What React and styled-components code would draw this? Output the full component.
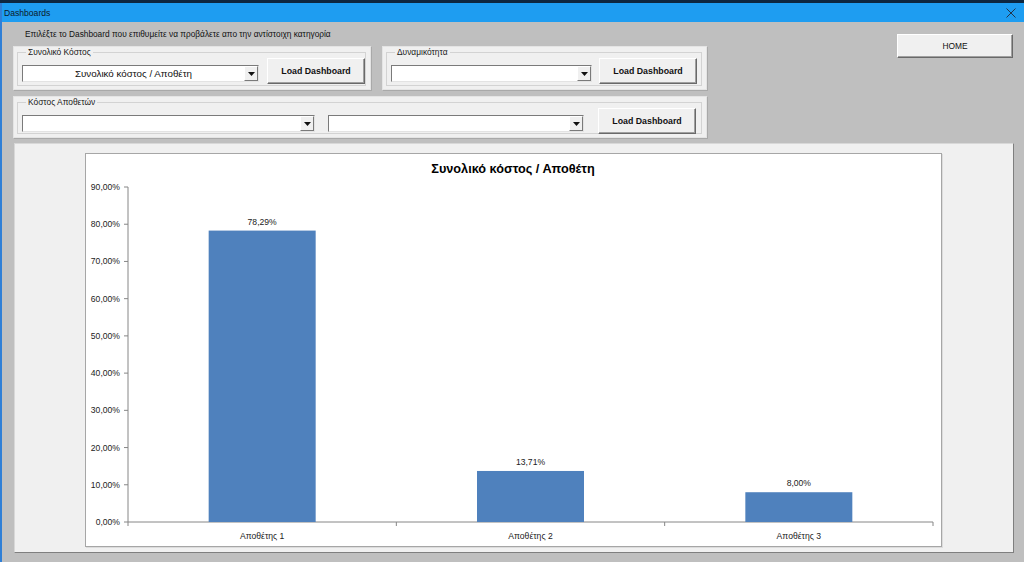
import styled, { createGlobalStyle } from 'styled-components';

const GlobalStyle = createGlobalStyle`
  html, body {
    margin: 0;
    padding: 0;
    background: #0d2740;
  }
  body {
    font-family: "Liberation Sans", Arial, sans-serif;
    color: #111;
  }
  #root {
    width: 1024px;
    height: 562px;
    overflow: hidden;
  }
`;

const bars = [
  { name: 'Αποθέτης 1', value: 78.29 },
  { name: 'Αποθέτης 2', value: 13.71 },
  { name: 'Αποθέτης 3', value: 8.0 },
];

const fmt = (v) => v.toFixed(2).replace('.', ',') + '%';

const ComboBox = ({ width, value }) => (
  <Combo $width={width}>
    <ComboText>{value}</ComboText>
    <ComboArrow>
      <svg width="7" height="4" viewBox="0 0 7 4">
        <path d="M0 0h7L3.5 4z" fill="#111" />
      </svg>
    </ComboArrow>
  </Combo>
);

const Chart = () => {
  // plot geometry inside the white chart frame
  const x0 = 42;
  const x1 = 847;
  const yZero = 368;
  const perTen = (368 - 33) / 9;
  const catW = (x1 - x0) / bars.length;
  const barW = 107;
  const ticks = Array.from({ length: 10 }, (_, i) => i);

  return (
    <svg width="855" height="392" viewBox="0 0 855 392">
      <text x="427" y="19" textAnchor="middle" fontSize="12.7" fontWeight="700" fill="#000">
        Συνολικό κόστος / Αποθέτη
      </text>
      <line x1={x0} y1={33} x2={x0} y2={yZero} stroke="#868686" />
      {ticks.map((t) => {
        const y = yZero - t * perTen;
        return (
          <g key={t}>
            <line x1={x0 - 4} y1={y} x2={x0} y2={y} stroke="#868686" />
            <text x={x0 - 8} y={y + 3} textAnchor="end" fontSize="8.6" fill="#222">
              {fmt(t * 10)}
            </text>
          </g>
        );
      })}
      <line x1={x0} y1={yZero} x2={x1} y2={yZero} stroke="#868686" />
      {[0, 1, 2, 3].map((i) => (
        <line key={i} x1={x0 + i * catW} y1={yZero} x2={x0 + i * catW} y2={yZero + 4} stroke="#868686" />
      ))}
      {bars.map((b, i) => {
        const cx = x0 + catW * (i + 0.5);
        const h = (b.value / 10) * perTen;
        return (
          <g key={b.name}>
            <rect x={cx - barW / 2} y={yZero - h} width={barW} height={h} fill="#4f81bd" />
            <text x={cx} y={yZero - h - 6} textAnchor="middle" fontSize="8.6" fill="#222">
              {fmt(b.value)}
            </text>
            <text x={cx} y={385} textAnchor="middle" fontSize="8.6" fill="#222">
              {b.name}
            </text>
          </g>
        );
      })}
    </svg>
  );
};

export default function App() {
  return (
    <>
      <GlobalStyle />
      <Shell>
        <TopStrip />
        <Window>
          <TitleBar>
            <TitleText>Dashboards</TitleText>
            <CloseIcon width="10" height="10" viewBox="0 0 10 10">
              <path d="M0.5 0.5l9 9M9.5 0.5l-9 9" stroke="#23344a" strokeWidth="1" />
            </CloseIcon>
          </TitleBar>
          <Body>
            <TopArea>
              <Controls>
                <Instruction>
                  Επιλέξτε το Dashboard που επιθυμείτε να προβάλετε απο την αντίστοιχη κατηγορία
                </Instruction>
                <FrameRow>
                  <Frame $width={358} $height={44}>
                    <Group>
                      <Legend>Συνολικό Κόστος</Legend>
                      <GroupContent $gap={8}>
                        <ComboBox width={237} value="Συνολικό κόστος / Αποθέτη" />
                        <LoadButton>Load Dashboard</LoadButton>
                      </GroupContent>
                    </Group>
                  </Frame>
                  <Frame $width={325} $height={44}>
                    <Group>
                      <Legend>Δυναμικότητα</Legend>
                      <GroupContent $gap={7}>
                        <ComboBox width={201} value="" />
                        <LoadButton>Load Dashboard</LoadButton>
                      </GroupContent>
                    </Group>
                  </Frame>
                </FrameRow>
                <FrameRow $top={6}>
                  <Frame $width={694} $height={42}>
                    <Group>
                      <Legend>Κόστος Αποθετών</Legend>
                      <GroupContent $gap={13}>
                        <ComboBox width={293} value="" />
                        <ComboBox width={256} value="" />
                        <LoadButton $shift={1}>Load Dashboard</LoadButton>
                      </GroupContent>
                    </Group>
                  </Frame>
                </FrameRow>
              </Controls>
              <HomeButton>HOME</HomeButton>
            </TopArea>
            <ChartPanel>
              <ChartFrame>
                <Chart />
              </ChartFrame>
            </ChartPanel>
          </Body>
        </Window>
      </Shell>
    </>
  );
}

const Shell = styled.div`
  width: 1024px;
  height: 562px;
  display: flex;
  flex-direction: column;
`;

const TopStrip = styled.div`
  height: 3px;
  background: #0d2740;
`;

const Window = styled.div`
  flex: 1;
  display: flex;
  flex-direction: column;
  border-left: 2px solid #2f7fd6;
  background: #bfbfbf;
  min-height: 0;
`;

const TitleBar = styled.div`
  height: 19px;
  flex-shrink: 0;
  background: #1e9df1;
  display: flex;
  align-items: center;
  justify-content: space-between;
  padding: 0 8px 0 2px;
`;

const TitleText = styled.span`
  font-size: 8.6px;
  color: #0b1a2a;
`;

const CloseIcon = styled.svg`
  display: block;
`;

const Body = styled.div`
  flex: 1;
  display: flex;
  flex-direction: column;
  padding: 0 9px 0 11px;
  min-height: 0;
`;

const TopArea = styled.div`
  display: flex;
  justify-content: space-between;
  align-items: flex-start;
`;

const Controls = styled.div`
  width: 694px;
  display: flex;
  flex-direction: column;
`;

const Instruction = styled.div`
  height: 24px;
  line-height: 24px;
  padding-left: 12px;
  font-size: 8.3px;
  color: #111;
  white-space: nowrap;
`;

const FrameRow = styled.div`
  display: flex;
  gap: 11px;
  margin-top: ${(p) => p.$top || 0}px;
`;

const Frame = styled.div`
  box-sizing: border-box;
  width: ${(p) => p.$width}px;
  height: ${(p) => p.$height}px;
  background: #f0f0f0;
  border: 1px solid #e4e4e4;
  box-shadow: 1px 1px 0 #a9a9a9;
  padding: 0 4px 3px 3px;
  display: flex;
`;

const Group = styled.fieldset`
  flex: 1;
  margin: 0;
  padding: 0 0 0 4px;
  border: 1px solid #d3d3d3;
  border-radius: 0;
  min-width: 0;
`;

const Legend = styled.legend`
  font-size: 8.4px;
  line-height: 11px;
  color: #1a1a1a;
  padding: 0 2px;
  margin-left: 4px;
`;

const GroupContent = styled.div`
  display: flex;
  align-items: flex-start;
  gap: ${(p) => p.$gap}px;
`;

const Combo = styled.div`
  box-sizing: border-box;
  width: ${(p) => p.$width}px;
  height: 17px;
  margin-top: 7px;
  background: #fff;
  border: 1px solid;
  border-color: #7a7a7a #e3e3e3 #e3e3e3 #7a7a7a;
  display: flex;
  align-items: stretch;
`;

const ComboText = styled.div`
  flex: 1;
  font-size: 9.8px;
  line-height: 15px;
  text-align: center;
  color: #111;
  white-space: nowrap;
  overflow: hidden;
`;

const ComboArrow = styled.div`
  box-sizing: border-box;
  width: 14px;
  background: #f0f0f0;
  border: 1px solid;
  border-color: #fff #7a7a7a #7a7a7a #fff;
  display: flex;
  align-items: center;
  justify-content: center;
`;

const LoadButton = styled.div`
  box-sizing: border-box;
  width: 98px;
  height: 26px;
  margin-left: ${(p) => p.$shift || 0}px;
  background: #f0f0f0;
  border: 1px solid;
  border-color: #fff #696969 #696969 #fff;
  box-shadow: inset -1px -1px 0 #a0a0a0;
  display: flex;
  align-items: center;
  justify-content: center;
  font-size: 8.8px;
  font-weight: 700;
  color: #111;
  white-space: nowrap;
`;

const HomeButton = styled.div`
  box-sizing: border-box;
  width: 116px;
  height: 24px;
  margin-top: 12px;
  margin-right: 2px;
  background: #f0f0f0;
  border: 1px solid;
  border-color: #fff #696969 #696969 #fff;
  box-shadow: inset -1px -1px 0 #a0a0a0;
  display: flex;
  align-items: center;
  justify-content: center;
  font-size: 8.4px;
  color: #111;
`;

const ChartPanel = styled.div`
  box-sizing: border-box;
  width: 1000px;
  height: 410px;
  flex-shrink: 0;
  margin: 5px 0 0 1px;
  background: #f0f0f0;
  border: 1px solid;
  border-color: #d8d8d8 #7f7f7f #7f7f7f #d8d8d8;
  padding: 9px 0 0 70px;
`;

const ChartFrame = styled.div`
  width: 855px;
  height: 392px;
  background: #fff;
  border: 1px solid #a6a6a6;
  box-shadow: 1px 1px 0 #dcdcdc;
`;
